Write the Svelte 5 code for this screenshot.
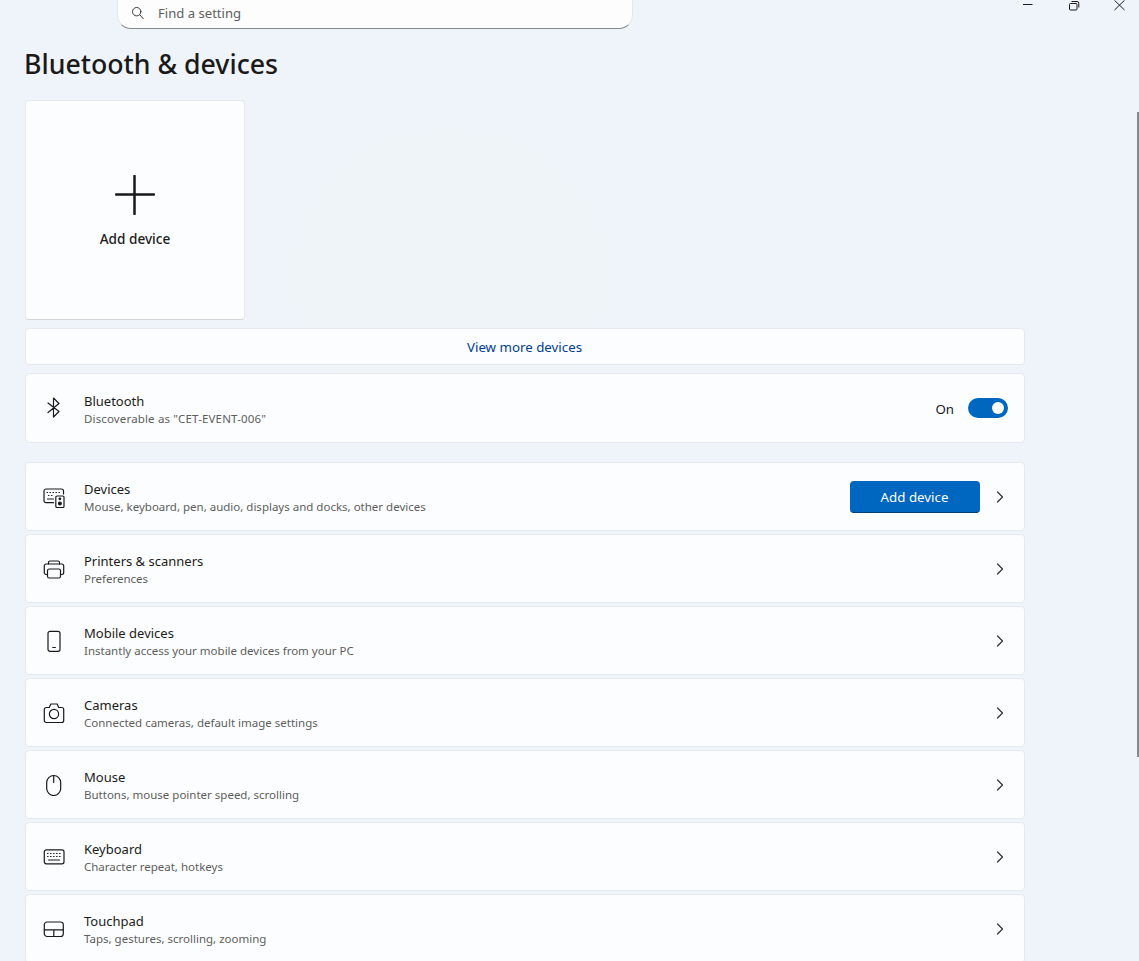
<script>
  const rows = [
    { id: 'devices', title: 'Devices', sub: 'Mouse, keyboard, pen, audio, displays and docks, other devices', action: true },
    { id: 'printer', title: 'Printers & scanners', sub: 'Preferences' },
    { id: 'mobile', title: 'Mobile devices', sub: 'Instantly access your mobile devices from your PC' },
    { id: 'camera', title: 'Cameras', sub: 'Connected cameras, default image settings' },
    { id: 'mouse', title: 'Mouse', sub: 'Buttons, mouse pointer speed, scrolling' },
    { id: 'keyboard', title: 'Keyboard', sub: 'Character repeat, hotkeys' },
    { id: 'touchpad', title: 'Touchpad', sub: 'Taps, gestures, scrolling, zooming' }
  ];
</script>

{#snippet icon(id)}
  <svg class="ico" viewBox="0 0 22 22" width="22" height="22" fill="none" stroke="#1a1a1a" stroke-width="1.2" stroke-linecap="round" stroke-linejoin="round">
    {#if id === 'bluetooth'}
      <path d="M5 6 16 14.500 10.500 20V1L16 6.500 5 15.500" />
    {:else if id === 'devices'}
      <path d="M10.500 16.700H3A2 2 0 0 1 1 14.700V5A2 2 0 0 1 3 3H18.500A2 2 0 0 1 20.500 5V8" />
      <rect x="12.800" y="10" width="8.200" height="11.500" rx="1.300" />
      <circle cx="16.900" cy="12.800" r=".8" fill="#1a1a1a" />
      <circle cx="16.900" cy="17.500" r="1.400" fill="#1a1a1a" />
      <path d="M4 6.500h.5M7 6.500h.5M10 6.500h.5M13 6.500h.5M16 6.500h.5M5.500 9.500h.5M8.500 9.500h.5M4.500 13h6" />
    {:else if id === 'printer'}
      <path d="M5.500 6V4.500A1.500 1.500 0 0 1 7 3h8a1.500 1.500 0 0 1 1.500 1.500V6" />
      <path d="M4.500 16.500H3.200A1.900 1.900 0 0 1 1.300 14.600V8A2 2 0 0 1 3.300 6h15.400a2 2 0 0 1 2 2v6.600a1.900 1.900 0 0 1-1.900 1.900H17.500" />
      <rect x="4.500" y="11" width="13" height="9" rx="1.800" />
    {:else if id === 'mobile'}
      <rect x="5" y="1.300" width="12" height="20" rx="2" />
      <path d="M9.800 17.500h2.600" />
    {:else if id === 'camera'}
      <path d="M3.300 5.500H6.300L7.800 2H14.200L15.700 5.500H18.700A2 2 0 0 1 20.700 7.500V18.500A2 2 0 0 1 18.700 20.500H3.300A2 2 0 0 1 1.300 18.500V7.500A2 2 0 0 1 3.300 5.500Z" />
      <circle cx="11" cy="12" r="4.600" />
    {:else if id === 'mouse'}
      <rect x="3.700" y="1.500" width="14" height="20" rx="7" />
      <path d="M10.700 1.800V8.500" />
    {:else if id === 'keyboard'}
      <rect x="1.300" y="3.900" width="19.700" height="13.900" rx="2" />
      <path d="M4.500 7.500h.6M7.500 7.500h.6M10.500 7.500h.6M13.500 7.500h.6M16.500 7.500h.6M4.500 10.500h.6M7.500 10.500h.6M10.500 10.500h.6M13.500 10.500h.6M16.500 10.500h.6M5.500 14h11" />
    {:else if id === 'touchpad'}
      <rect x="1.300" y="4" width="19" height="14.500" rx="2.800" />
      <path d="M1.300 11.800h19M10.800 11.800v6.700" />
    {/if}
  </svg>
{/snippet}

{#snippet chevron()}
  <svg class="chev" viewBox="0 0 10 14" width="10" height="14" fill="none" stroke="#303030" stroke-width="1.200" stroke-linecap="round" stroke-linejoin="round">
    <path d="M2.500 2 7.500 7 2.500 12" />
  </svg>
{/snippet}

<div class="page">
  <div class="bg-shape"></div>
  <div class="scrollthumb"></div>

  <div class="winctl">
    <svg viewBox="0 0 12 12" width="12" height="12" class="min"><path d="M1 4.500H10.500" stroke="#1a1a1a" stroke-width="1" /></svg>
    <svg viewBox="0 0 12 12" width="12" height="12" class="max" fill="none" stroke="#1a1a1a" stroke-width="1"><rect x="1.500" y="3.500" width="7.500" height="6.500" rx="1" /><path d="M3.500 1.500H9A1.800 1.800 0 0 1 10.800 3.300V7.500" /></svg>
    <svg viewBox="0 0 12 12" width="12" height="12" class="close" fill="none" stroke="#1a1a1a" stroke-width="1"><path d="M.5 .3 10.500 10M10.500 .3 .5 10" /></svg>
  </div>

  <header class="search">
    <svg viewBox="0 0 16 16" width="14" height="14" fill="none" stroke="#333" stroke-width="1.100" stroke-linecap="round"><circle cx="6.500" cy="6.500" r="4.800" /><path d="M10 10 14 14.500" /></svg>
    <span>Find a setting</span>
  </header>

  <h1>Bluetooth &amp; devices</h1>

  <main class="content">
    <button class="add-tile">
      <svg viewBox="0 0 40 40" width="40" height="40" stroke="#1a1a1a" stroke-width="2.500" stroke-linecap="round"><path d="M19.500 1V39M1 19.500H39" /></svg>
      <span>Add device</span>
    </button>

    <a class="more card" href="#more">View more devices</a>

    <section class="card row bt">
      {@render icon('bluetooth')}
      <div class="txt">
        <div class="t">Bluetooth</div>
        <div class="s">Discoverable as "CET-EVENT-006"</div>
      </div>
      <span class="on">On</span>
      <span class="toggle"><i></i></span>
    </section>

    <div class="list">
      {#each rows as r}
        <section class="card row">
          {@render icon(r.id)}
          <div class="txt">
            <div class="t">{r.title}</div>
            <div class="s">{r.sub}</div>
          </div>
          {#if r.action}<button class="primary">Add device</button>{/if}
          {@render chevron()}
        </section>
      {/each}
    </div>
  </main>
</div>

<style>
  :global(body) { margin: 0; }
  .page {
    position: relative;
    width: 1139px;
    height: 961px;
    overflow: hidden;
    background: #eff4fb;
    font-family: "Noto Sans", "Open Sans", sans-serif;
    color: #1b1b1b;
  }
  .bg-shape {
    position: absolute;
    left: 250px;
    top: 90px;
    width: 400px;
    height: 370px;
    background: radial-gradient(closest-side, #eef4f7 60%, #eff4fb00 100%);
  }
  .scrollthumb {
    position: absolute;
    left: 1137px;
    top: 112px;
    width: 2px;
    height: 645px;
    background: #85888c;
  }
  .winctl svg { position: absolute; top: 0; }
  .min { left: 1022px; }
  .max { left: 1068px; }
  .close { left: 1114px; }
  .search {
    position: relative;
    box-sizing: border-box;
    margin-left: 117px;
    width: 516px;
    height: 29px;
    background: #fdfdfe;
    border: 1px solid #e3e6ea;
    border-top: 0;
    border-bottom: 1px solid #85878a;
    border-radius: 0 0 14px 14px;
    display: flex;
    align-items: center;
    padding: 0 0 2px 13px;
    gap: 13px;
    font-size: 13.100px;
    color: #5f5f5f;
  }
  h1 {
    position: relative;
    margin: 15px 0 0 24px;
    height: 40px;
    font-size: 26.700px;
    line-height: 40px;
    font-weight: 500;
    color: #1a1a1a;
  }
  .content {
    position: relative;
    margin: 16px 0 0 25px;
    width: 1000px;
    display: flex;
    flex-direction: column;
    align-items: flex-start;
  }
  .add-tile {
    width: 220px;
    height: 220px;
    box-sizing: border-box;
    background: #fcfdfe;
    border: 1px solid #e6e9ed;
    border-bottom-color: #d3d6da;
    border-radius: 4px;
    display: flex;
    flex-direction: column;
    align-items: center;
    padding: 74px 0 0;
    gap: 14px;
    font: 500 13.600px "Noto Sans", sans-serif;
    color: #1b1b1b;
  }
  .card {
    box-sizing: border-box;
    width: 1000px;
    background: #fcfdfe;
    border: 1px solid #e5e8ec;
    border-radius: 4px;
  }
  .more {
    margin-top: 8px;
    height: 37px;
    display: flex;
    align-items: center;
    justify-content: center;
    font-size: 13.300px;
    color: #003e92;
    text-decoration: none;
    padding-right: 1px;
  }
  .row {
    height: 69px;
    display: flex;
    align-items: center;
    padding: 0 19px 0 17px;
    flex: none;
  }
  .bt { margin-top: 8px; height: 70px; padding-right: 16px; }
  .bt .txt { padding-top: 4px; }
  .bt .s { letter-spacing: .15px; }
  .ico { flex: none; }
  .txt { flex: 1; margin-left: 19px; min-width: 0; padding-top: 2px; }
  .t { font-size: 13px; line-height: 18px; color: #1b1b1b; }
  .s { font-size: 11.500px; line-height: 18px; color: #5d5d5d; }
  .on { font-size: 13.300px; color: #1b1b1b; margin: 2px 14px 0 0; }
  .toggle {
    width: 40px;
    height: 20px;
    border-radius: 10px;
    background: #0067c0;
    position: relative;
    flex: none;
  }
  .toggle i {
    position: absolute;
    right: 4px;
    top: 4px;
    width: 12px;
    height: 12px;
    border-radius: 50%;
    background: #fff;
  }
  .list {
    margin-top: 19px;
    display: flex;
    flex-direction: column;
    gap: 3px;
  }
  .primary {
    width: 130px;
    height: 32px;
    margin-right: 15px;
    background: #0067c0;
    color: #fff;
    border: 0;
    border-bottom: 1px solid #003e73;
    border-radius: 4px;
    font: 13.300px "Noto Sans", sans-serif;
    padding: 1px 1px 0 0;
  }
  .chev { flex: none; }
</style>
